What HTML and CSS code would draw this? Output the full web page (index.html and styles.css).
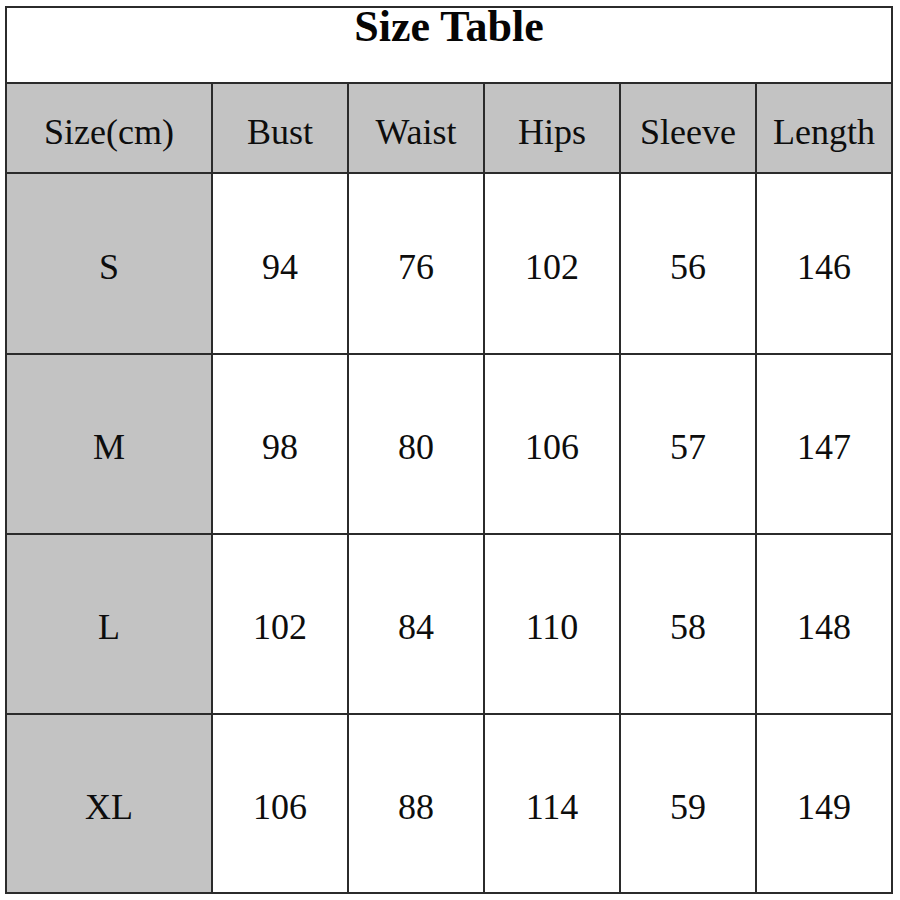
FILE: index.html
```html
<!DOCTYPE html>
<html>
<head>
<meta charset="utf-8">
<link rel="stylesheet" href="styles.css">
</head>
<body>
<div class="size-table">
  <div class="cell title">Size Table</div>
  <div class="cell head">Size(cm)</div>
  <div class="cell head">Bust</div>
  <div class="cell head">Waist</div>
  <div class="cell head">Hips</div>
  <div class="cell head">Sleeve</div>
  <div class="cell head">Length</div>

  <div class="cell label">S</div>
  <div class="cell">94</div>
  <div class="cell">76</div>
  <div class="cell">102</div>
  <div class="cell">56</div>
  <div class="cell">146</div>

  <div class="cell label">M</div>
  <div class="cell">98</div>
  <div class="cell">80</div>
  <div class="cell">106</div>
  <div class="cell">57</div>
  <div class="cell">147</div>

  <div class="cell label">L</div>
  <div class="cell">102</div>
  <div class="cell">84</div>
  <div class="cell">110</div>
  <div class="cell">58</div>
  <div class="cell">148</div>

  <div class="cell label">XL</div>
  <div class="cell">106</div>
  <div class="cell">88</div>
  <div class="cell">114</div>
  <div class="cell">59</div>
  <div class="cell">149</div>
</div>
</body>
</html>
```

FILE: styles.css
```css
html, body {
  margin: 0;
  padding: 0;
  background: #ffffff;
}

body {
  font-family: "Liberation Serif", "Times New Roman", serif;
  color: #0d0d0d;
}

.size-table {
  margin: 6px 0 0 5px;
  width: 888px;
  box-sizing: border-box;
  display: grid;
  grid-template-columns: 204px 134px 134px 134px 134px 134px;
  grid-template-rows: 74px 88px 179px 178px 178px 177px;
  gap: 2px;
  padding: 2px;
  background: #2b2b2b;
}

.cell {
  background: #ffffff;
  display: flex;
  align-items: center;
  justify-content: center;
  font-size: 36px;
  padding-top: 6px;
  box-sizing: border-box;
}

.title {
  grid-column: 1 / span 6;
  align-items: flex-start;
  padding-top: 0;
  font-size: 44px;
  font-weight: bold;
  line-height: 38px;
  color: #050505;
}

.head {
  background: #c3c3c3;
  padding-top: 8px;
}

.label {
  background: #c3c3c3;
}
```
